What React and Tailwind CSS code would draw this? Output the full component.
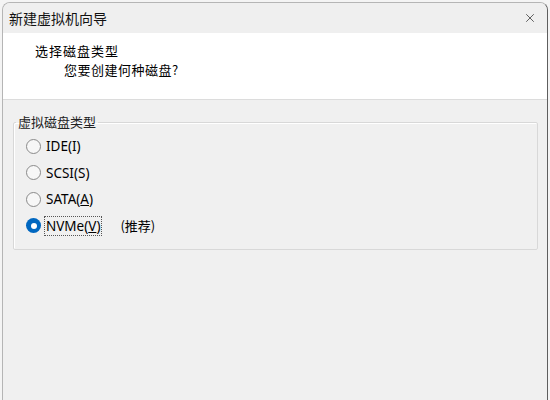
import { X } from "lucide-react";

const cjk = { fontFamily: '"Noto Sans CJK SC", "Noto Sans", sans-serif' };
const ui = { fontFamily: '"Noto Sans", "Noto Sans CJK SC", sans-serif' };

function Radio({ checked }) {
  if (checked) {
    return (
      <span className="w-[15px] h-[15px] rounded-full bg-[#0067c0] flex items-center justify-center shrink-0">
        <span className="w-[6px] h-[6px] rounded-full bg-white" />
      </span>
    );
  }
  return <span className="w-[15px] h-[15px] rounded-full border border-[#8a8a8a] bg-[#f7f7f7] shrink-0" />;
}

function Option({ checked, children, extra }) {
  return (
    <div className="h-[26.5px] flex items-center gap-[3px] pl-[12px]">
      <Radio checked={checked} />
      <span
        className={`text-[13.5px] leading-[18px] text-black px-[1px] border ${
          checked ? "border-dotted border-[#555]" : "border-transparent"
        }`}
        style={ui}
      >
        {children}
      </span>
      {extra && (
        <span className="ml-[15px] text-[13px] leading-[18px] text-black" style={cjk}>
          {extra}
        </span>
      )}
    </div>
  );
}

export default function App() {
  return (
    <div className="w-[550px] h-[400px] bg-[#f4f4f4] overflow-hidden pl-[2px] pt-[2px]">
      <div className="w-[546px] h-[398px] rounded-t-[8px] border border-[#b5b5b5] border-r-[#5e5e5e] border-b-0 bg-[#f0f0f0] flex flex-col overflow-hidden">
        {/* 标题栏 */}
        <div className="h-[30px] flex items-center justify-between pl-[6px] pr-[10px] bg-[#efefef]">
          <span className="text-[14px] text-[#111]" style={cjk}>
            新建虚拟机向导
          </span>
          <X size={14} strokeWidth={1.2} className="text-[#222]" />
        </div>

        {/* 头部 */}
        <div className="h-[67px] bg-white border-b border-[#dcdcdc] pt-[8px]">
          <div className="pl-[32px] text-[13px] leading-[19px] tracking-[1px] text-black" style={cjk}>
            选择磁盘类型
          </div>
          <div className="pl-[61px] text-[13px] leading-[19px] tracking-[0.5px] text-black" style={cjk}>
            您要创建何种磁盘?
          </div>
        </div>

        {/* 主体 */}
        <div className="flex-1 px-[10px] pt-[13px]">
          <fieldset className="w-[525px] h-[137px] border border-[#d8d8d8] rounded-[2px] shadow-[inset_1px_1px_0_#ffffff]">
            <legend className="ml-[2px] px-[2px] text-[13px] leading-[18px] text-[#222]" style={cjk}>
              虚拟磁盘类型
            </legend>
            <div className="pt-[2px] flex flex-col">
              <Option>IDE(I)</Option>
              <Option>SCSI(S)</Option>
              <Option>
                SATA(<span className="underline">A</span>)
              </Option>
              <Option checked extra="(推荐)">
                NVMe(<span className="underline">V</span>)
              </Option>
            </div>
          </fieldset>
        </div>
      </div>
    </div>
  );
}
